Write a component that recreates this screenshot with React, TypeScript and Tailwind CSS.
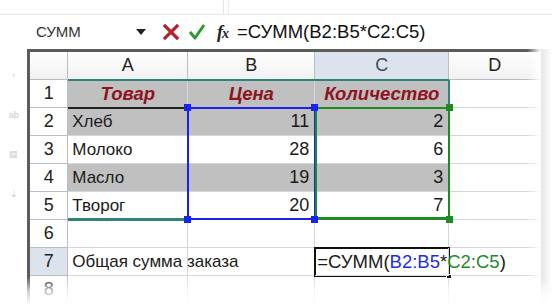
import React from 'react';

const cols = ['A', 'B', 'C', 'D'];

const rows: { n: number; a: string; b: string; c: string; gray: boolean }[] = [
  { n: 2, a: 'Хлеб', b: '11', c: '2', gray: true },
  { n: 3, a: 'Молоко', b: '28', c: '6', gray: false },
  { n: 4, a: 'Масло', b: '19', c: '3', gray: true },
  { n: 5, a: 'Творог', b: '20', c: '7', gray: false },
];

const cell = 'h-[28px] border-r border-b border-[#d4d8de] flex items-center overflow-visible whitespace-nowrap';
const rowHead = 'h-[28px] border-r border-b border-[#b9bec6] flex items-center justify-center text-[18px] text-[#222]';
const title = ' bg-[#c0c0c0] justify-center font-bold italic text-[18.5px] text-[#8d1420]';

const App = () => {
  return (
    <div className="w-[552px] h-[305px] bg-white relative overflow-hidden font-['Liberation_Sans',Arial,sans-serif] text-[#1a1a1a]">
      {/* ribbon remnants */}
      <div className="h-[15px] flex border-b border-[#e6e6e6]">
        <div className="w-[224px] border-r border-[#e4e4e4]" />
        <div className="w-[5px] border-r border-[#ececec]" />
        <div className="flex-1" />
      </div>

      {/* formula bar */}
      <div className="h-[34px] flex items-center">
        <div className="w-[36px]" />
        <div className="w-[100px] text-[15px] text-[#333]">СУММ</div>
        <div className="w-0 h-0 border-l-[5px] border-r-[5px] border-t-[6px] border-l-transparent border-r-transparent border-t-[#222]" />
        <svg width="18" height="18" viewBox="0 0 18 18" className="ml-[16px]">
          <path d="M3 3 L15 15 M15 3 L3 15" stroke="#b5242a" strokeWidth="3.2" strokeLinecap="square" />
        </svg>
        <svg width="20" height="20" viewBox="0 0 20 20" className="ml-[7px]">
          <path d="M3 10 L8 16 L17 3" stroke="#2a9a32" strokeWidth="3" fill="none" strokeLinejoin="round" />
        </svg>
        <span className="ml-[10px] text-[18px] italic font-bold font-['Liberation_Serif',serif] text-[#222] tracking-[-1px]">
          f<span className="text-[14px]">x</span>
        </span>
        <span className="ml-[9px] text-[18.5px] text-[#111]">=СУММ(B2:B5*C2:C5)</span>
      </div>

      {/* sheet area */}
      <div className="flex">
        <div className="w-[28px] flex flex-col items-center gap-[26px] pt-[20px] text-[9px] text-[#c8c8c8]">
          <span>▫</span>
          <span>ab</span>
          <span>▤</span>
          <span>⇣</span>
        </div>

        <div className="relative border-t-[3px] border-l-[3px] border-[#5c5c5c]">
          <div className="grid grid-cols-[38px_120px_127px_134px_92px]">
            {/* column headers */}
            <div className="h-[28px] border-r border-b border-[#b9bec6] bg-gradient-to-b from-white to-[#f1f1f1]" />
            {cols.map((c) => (
              <div
                key={c}
                className={
                  'h-[28px] border-r border-b border-[#b9bec6] flex items-center justify-center text-[18px] ' +
                  (c === 'C' ? 'bg-[#dde3ec] text-[#3a4a66]' : 'bg-gradient-to-b from-white to-[#f1f1f1] text-[#222]')
                }
              >
                {c}
              </div>
            ))}

            {/* row 1 */}
            <div className={rowHead}>1</div>
            <div className={cell + title}>Товар</div>
            <div className={cell + title}>Цена</div>
            <div className={cell + title}>Количество</div>
            <div className={cell} />

            {rows.map((r) => (
              <React.Fragment key={r.n}>
                <div className={rowHead}>{r.n}</div>
                <div className={cell + ' pl-[4px] text-[17px] ' + (r.gray ? 'bg-[#c0c0c0]' : '')}>{r.a}</div>
                <div className={cell + ' justify-end pr-[5px] text-[18px] ' + (r.gray ? 'bg-[#c0c0c0]' : '')}>{r.b}</div>
                <div className={cell + ' justify-end pr-[5px] text-[18px] ' + (r.gray ? 'bg-[#c0c0c0]' : '')}>{r.c}</div>
                <div className={cell} />
              </React.Fragment>
            ))}

            {/* row 6 */}
            <div className={rowHead}>6</div>
            <div className={cell} />
            <div className={cell} />
            <div className={cell} />
            <div className={cell} />

            {/* row 7 */}
            <div className={rowHead + ' bg-[#dde3ec] text-[#1f3470]'}>7</div>
            <div className={cell + ' pl-[4px] text-[17px]'}>Общая сумма заказа</div>
            <div className={cell} />
            <div className={cell + ' pl-[2px] text-[18.5px] relative z-10'}>
              =СУММ(<span className="text-[#1f2ee6]">B2:B5</span>*<span className="text-[#1e8a2a]">C2:C5</span>)
            </div>
            <div className={cell} />

            {/* row 8 */}
            <div className={rowHead}>8</div>
            <div className={cell} />
            <div className={cell} />
            <div className={cell} />
            <div className={cell} />
          </div>

          {/* table borders */}
          <div className="absolute left-[38px] top-[27px] w-[381px] h-[2px] bg-[#2e8479]" />
          <div className="absolute left-[418px] top-[28px] w-[2px] h-[28px] bg-[#2e8479]" />
          <div className="absolute left-[38px] top-[55px] w-[120px] h-[2px] bg-[#222]" />
          <div className="absolute left-[38px] top-[166px] w-[120px] h-[3px] bg-[#2e8479]" />

          {/* range B2:B5 */}
          <div className="absolute left-[157px] top-[55px] w-[129px] h-[113px] border-2 border-[#1a22f0]" />
          {/* range C2:C5 */}
          <div className="absolute left-[285px] top-[55px] w-[135px] h-[113px] border-2 border-[#1f8a22] border-b-[3px]" />
          <div className="absolute left-[154px] top-[52px] w-[7px] h-[7px] bg-[#1a22f0]" />
          <div className="absolute left-[154px] top-[164px] w-[7px] h-[7px] bg-[#1a22f0]" />
          <div className="absolute left-[281px] top-[52px] w-[7px] h-[7px] bg-[#1a22f0]" />
          <div className="absolute left-[281px] top-[164px] w-[7px] h-[7px] bg-[#1a22f0]" />
          <div className="absolute left-[416px] top-[52px] w-[7px] h-[7px] bg-[#1f8a22]" />
          <div className="absolute left-[416px] top-[164px] w-[7px] h-[7px] bg-[#1f8a22]" />

          {/* active cell C7 */}
          <div className="absolute left-[284px] top-[195px] w-[136px] h-[30px] border-2 border-[#111]" />
          <div className="absolute left-[416px] top-[222px] w-[6px] h-[5px] bg-[#111] border border-white" />

          {/* soft fading edges */}
          <div className="absolute right-0 top-[-3px] bottom-0 w-[14px] bg-gradient-to-r from-transparent to-white" />
        </div>
        <div className="w-[11px] bg-gradient-to-r from-[#e6e6e6] to-white" />
      </div>

      <div className="absolute left-0 right-0 bottom-0 h-[28px] bg-gradient-to-b from-transparent via-white/70 to-white" />
    </div>
  );
};

export default App;
